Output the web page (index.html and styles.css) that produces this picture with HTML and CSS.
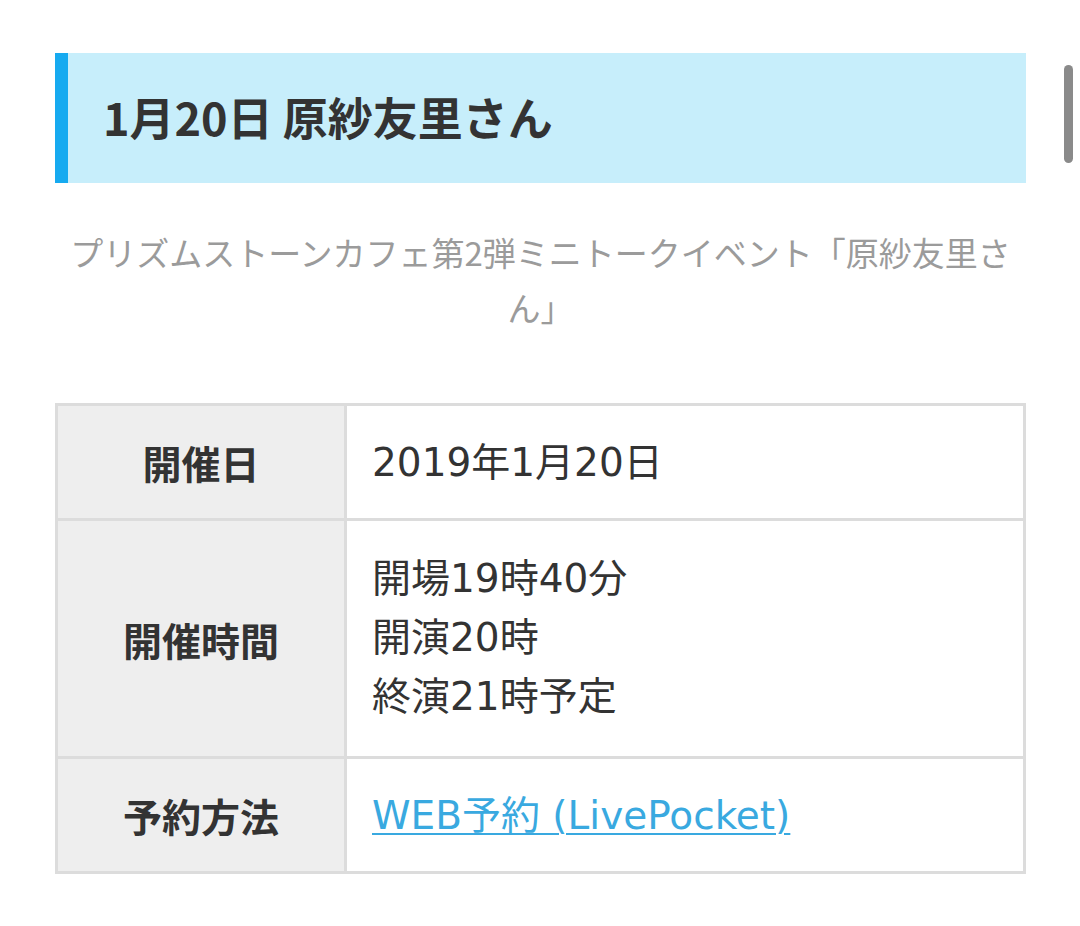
FILE: index.html
```html
<!DOCTYPE html>
<html lang="ja">
<head>
<meta charset="utf-8">
<title>1月20日 原紗友里さん</title>
<link rel="stylesheet" href="styles.css">
</head>
<body>
<main class="page">
  <h2 class="heading">1月20日 原紗友里さん</h2>
  <p class="lead">プリズムストーンカフェ第2弾ミニトークイベント「原紗友里さん」</p>
  <table class="info">
    <tr>
      <th>開催日</th>
      <td>2019年1月20日</td>
    </tr>
    <tr>
      <th>開催時間</th>
      <td class="multi">開場19時40分<br>開演20時<br>終演21時予定</td>
    </tr>
    <tr>
      <th>予約方法</th>
      <td><a class="link" href="#">WEB予約 (LivePocket)</a></td>
    </tr>
  </table>
</main>
<div class="scrollbar"></div>
</body>
</html>
```

FILE: styles.css
```css
html, body {
  margin: 0;
  padding: 0;
  background: #fff;
}
body {
  font-family: "Noto Sans CJK JP", "Noto Sans", sans-serif;
  color: #333;
}
.page {
  width: 971px;
  padding: 53px 0 0 55px;
}
.heading {
  margin: 0;
  height: 130px;
  box-sizing: border-box;
  display: flex;
  align-items: center;
  background: #c7eefb;
  border-left: 13px solid #16aaf0;
  padding-left: 35px;
  padding-bottom: 4px;
  font-size: 45px;
  font-weight: 700;
  color: #333;
}
.lead {
  margin: 42px 0 0;
  padding: 0 10px;
  text-align: center;
  font-size: 33px;
  line-height: 55px;
  color: #9b9b9b;
  font-weight: 400;
}
.info {
  margin-top: 68px;
  width: 971px;
  border-collapse: collapse;
  border: 3px solid #dcdcdc;
}
.info th,
.info td {
  border: 3px solid #dcdcdc;
  font-size: 39px;
  line-height: 59px;
  padding: 27px 25px 26px;
  vertical-align: middle;
}
.info td.multi {
  padding-top: 28px;
  padding-bottom: 30px;
}
.info th {
  width: 236px;
  background: #eeeeee;
  font-weight: 700;
  text-align: center;
  color: #333;
}
.info td {
  background: #fff;
  text-align: left;
  font-weight: 400;
  color: #333;
  font-family: "DejaVu Sans", "Noto Sans CJK JP", sans-serif;
}
.link {
  color: #39a9e0;
  text-decoration: underline;
  text-decoration-thickness: 2px;
  text-underline-offset: 4px;
}
.scrollbar {
  position: fixed;
  top: 65px;
  left: 1064px;
  width: 9px;
  height: 98px;
  border-radius: 5px;
  background: #8a8a8a;
}
```
